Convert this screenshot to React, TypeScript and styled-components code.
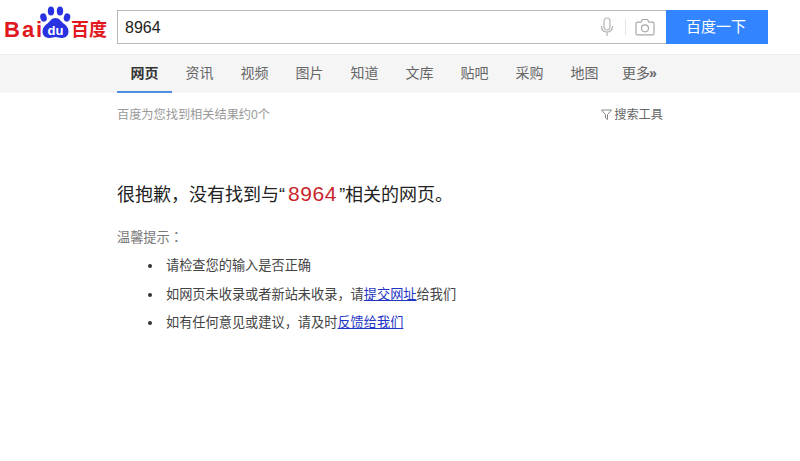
import React from 'react';
import styled, { createGlobalStyle } from 'styled-components';

const GlobalStyle = createGlobalStyle`
    html, body {
        margin: 0;
        padding: 0;
        background: #fff;
        font-family: "Liberation Sans", "Noto Sans CJK SC", sans-serif;
    }
    body {
        width: 800px;
        height: 461px;
        overflow: hidden;
    }
`;

const Header = styled.div`
    display: flex;
    align-items: flex-start;
    height: 54px;
    padding: 10px 0 0 4px;
    box-sizing: border-box;
`;

const Logo = styled.div`
    position: relative;
    width: 113px;
    height: 34px;
    color: #e1191f;
`;

const LogoLatin = styled.span`
    position: absolute;
    left: 0;
    top: 8px;
    font-size: 22px;
    line-height: 24px;
    font-weight: 700;
    letter-spacing: 2px;
`;

const LogoCjk = styled.span`
    position: absolute;
    left: 67px;
    top: 8px;
    font-size: 18px;
    line-height: 24px;
    font-weight: 700;
`;

const Paw = styled.svg`
    position: absolute;
    left: 35px;
    top: -4px;
`;

const SearchBox = styled.div`
    width: 549px;
    height: 34px;
    box-sizing: border-box;
    border: 1px solid #b8b8b8;
    border-right: none;
    display: flex;
    align-items: center;
    padding: 0 11px 0 7px;
`;

const Query = styled.span`
    flex: 1;
    font-size: 16px;
    color: #222;
    padding-top: 2px;
`;

const IconDivider = styled.span`
    width: 1px;
    height: 16px;
    background: #e6e6e6;
    margin: 0 9px 0 11px;
`;

const SearchButton = styled.button`
    width: 102px;
    height: 34px;
    border: none;
    padding: 0 2px 4px 0;
    background: #3385ff;
    color: #fff;
    font-family: inherit;
    font-size: 15px;
`;

const Nav = styled.div`
    display: flex;
    height: 39px;
    box-sizing: border-box;
    border-top: 1px solid #eeeeee;
    background: #f5f5f6;
    padding-left: 117px;
`;

const Tab = styled.div<{ $active?: boolean }>`
    width: 55px;
    height: 38px;
    box-sizing: border-box;
    text-align: center;
    font-size: 14px;
    line-height: 36px;
    color: ${p => (p.$active ? '#333' : '#666')};
    font-weight: ${p => (p.$active ? 700 : 400)};
    border-bottom: 2px solid ${p => (p.$active ? '#4e8de0' : 'transparent')};
`;

const Raquo = styled.span`
    font-weight: 700;
    margin-left: -1px;
`;

const Content = styled.div`
    width: 546px;
    padding-left: 117px;
`;

const InfoRow = styled.div`
    display: flex;
    justify-content: space-between;
    align-items: center;
    height: 20px;
    margin-top: 11px;
    font-size: 12.2px;
    color: #999;
`;

const Tools = styled.div`
    display: flex;
    align-items: center;
    gap: 2px;
    color: #666;
`;

const Sorry = styled.div`
    margin-top: 58px;
    font-size: 18px;
    line-height: 26px;
    color: #222;
`;

const Keyword = styled.em`
    font-style: normal;
    font-size: 21px;
    letter-spacing: 0.6px;
    color: #c9252c;
    margin: 0 2px 0 3px;
    line-height: 20px;
`;

const HintTitle = styled.div`
    margin-top: 19px;
    font-size: 13.2px;
    line-height: 20px;
    color: #777;
`;

const Colon = styled.span`
    font-family: "Noto Sans CJK TC", sans-serif;
`;

const Hints = styled.ul`
    margin: 8px 0 0;
    padding: 0 0 0 49px;
    list-style: none;
    font-size: 13.2px;
    color: #444;
`;

const Hint = styled.li`
    position: relative;
    height: 28.5px;
    line-height: 20px;

    &::before {
        content: "";
        position: absolute;
        left: -18px;
        top: 8px;
        width: 4px;
        height: 4px;
        border-radius: 50%;
        background: #333;
    }
`;

const HintLink = styled.a`
    color: #1f36c4;
    text-decoration: underline;
`;

const tabs = ['资讯', '视频', '图片', '知道', '文库', '贴吧', '采购', '地图'];

const App: React.FC = () => {
    return (
        <>
            <GlobalStyle />
            <Header>
                <Logo>
                    <LogoLatin>Bai</LogoLatin>
                    <Paw width="32" height="34" viewBox="0 0 32 34">
                        <ellipse cx="4.500" cy="11.500" rx="3.200" ry="4.200" fill="#2932e1" transform="rotate(-15 4.500 11.500)" />
                        <ellipse cx="12" cy="5" rx="3.200" ry="4.500" fill="#2932e1" />
                        <ellipse cx="21" cy="5" rx="3.200" ry="4.500" fill="#2932e1" />
                        <ellipse cx="28" cy="11.500" rx="3.200" ry="4.200" fill="#2932e1" transform="rotate(15 28 11.500)" />
                        <path d="M16.500 12c4 0 5 3 8 5.500 3 2 5 4.500 5 8 0 4.500-3.500 6.500-7 6.500-2 0-4.500-1-6-1s-4 1-6 1c-3.500 0-7-2-7-6.500 0-3.500 2-6 5-8 3-2.500 4-5.500 8-5.500z" fill="#2932e1" />
                        <text x="16.500" y="29" textAnchor="middle" fontSize="13" fontWeight="700" fill="#fff" fontFamily="Liberation Sans">du</text>
                    </Paw>
                    <LogoCjk>百度</LogoCjk>
                </Logo>
                <SearchBox>
                    <Query>8964</Query>
                    <svg width="14" height="20" viewBox="0 0 14 20" fill="none" stroke="#b5b5b5" strokeWidth="1.2">
                        <rect x="4" y="1" width="6" height="12" rx="3" />
                        <path d="M1.500 9c0 4 2 6 5.500 6s5.500-2 5.500-6M7 15v4" />
                    </svg>
                    <IconDivider />
                    <svg width="20" height="18" viewBox="0 0 20 18" fill="none" stroke="#a8a8a8" strokeWidth="1.2">
                        <path d="M1 5.500c0-.8.500-1.300 1.300-1.300H6L7.500 1.500h5L14 4.200h3.700c.8 0 1.300.5 1.300 1.300v10c0 .8-.5 1.300-1.300 1.300H2.300c-.8 0-1.300-.5-1.300-1.300z" />
                        <circle cx="10" cy="10.300" r="3.500" />
                    </svg>
                </SearchBox>
                <SearchButton>百度一下</SearchButton>
            </Header>
            <Nav>
                <Tab $active>网页</Tab>
                {tabs.map(t => (
                    <Tab key={t}>{t}</Tab>
                ))}
                <Tab>更多<Raquo>»</Raquo></Tab>
            </Nav>
            <Content>
                <InfoRow>
                    <span>百度为您找到相关结果约0个</span>
                    <Tools>
                        <svg width="11" height="11" viewBox="0 0 11 11" fill="none" stroke="#888" strokeWidth="1">
                            <path d="M.5 1h10L6.500 5.500V10.500L4.500 9V5.500z" />
                        </svg>
                        搜索工具
                    </Tools>
                </InfoRow>
                <Sorry>很抱歉，没有找到与“<Keyword>8964</Keyword>”相关的网页。</Sorry>
                <HintTitle>温馨提示<Colon>：</Colon></HintTitle>
                <Hints>
                    <Hint>请检查您的输入是否正确</Hint>
                    <Hint>如网页未收录或者新站未收录，请<HintLink href="#">提交网址</HintLink>给我们</Hint>
                    <Hint>如有任何意见或建议，请及时<HintLink href="#">反馈给我们</HintLink></Hint>
                </Hints>
            </Content>
        </>
    );
};

export default App;
